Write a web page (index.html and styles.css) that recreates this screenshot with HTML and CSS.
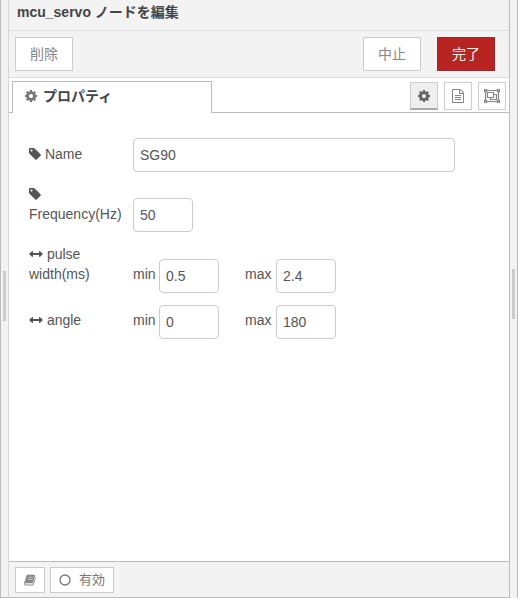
FILE: index.html
```
<!DOCTYPE html>
<html lang="ja">
<head>
<meta charset="utf-8">
<title>mcu_servo ノードを編集</title>
<link rel="stylesheet" href="styles.css">
</head>
<body>
<svg class="sprites" aria-hidden="true">
  <symbol id="cog" viewBox="128 128 1536 1536"><path d="M1152 896q0-106-75-181t-181-75-181 75-75 181 75 181 181 75 181-75 75-181zm512-109v222q0 12-8 23t-20 13l-185 28q-19 54-39 91 35 50 107 138 10 12 10 25t-9 23q-27 37-99 108t-94 71q-12 0-26-9l-138-108q-44 23-91 38-16 136-29 186-7 28-36 28h-222q-14 0-24.500-8.500t-11.500-21.500l-28-184q-49-16-90-37l-141 107q-10 9-25 9-14 0-25-11-126-114-165-168-7-10-7-23 0-12 8-23 15-21 51-66.500t54-70.500q-27-50-41-99l-183-27q-13-2-21-12.500t-8-23.500v-222q0-12 8-23t19-13l186-28q14-46 39-92-40-57-107-138-10-12-10-24 0-10 9-23 26-36 98.500-107.500t94.500-71.500q13 0 26 10l138 107q44-23 91-38 16-136 29-186 7-28 36-28h222q14 0 24.500 8.500t11.500 21.500l28 184q49 16 90 37l142-107q9-9 24-9 13 0 25 10 129 119 165 170 7 8 7 22 0 12-8 23-15 21-51 66.500t-54 70.500q26 50 41 98l183 28q13 2 21 12.500t8 23.500z"/></symbol>
  <symbol id="tag" viewBox="128 128 1536 1536"><path d="M576 448q0-53-37.500-90.500t-90.500-37.500-90.500 37.500-37.500 90.500 37.500 90.500 90.500 37.500 90.500-37.500 37.500-90.500zm1067 576q0 53-37 90l-491 492q-39 37-91 37-53 0-90-37l-715-716q-38-37-64.500-101t-26.500-117v-416q0-52 38-90t90-38h416q53 0 117 26.500t102 64.500l715 714q37 39 37 91z"/></symbol>
  <symbol id="file" viewBox="128 0 1536 1792"><path d="M1596 380q28 28 48 76t20 88v1152q0 40-28 68t-68 28h-1344q-40 0-68-28t-28-68v-1600q0-40 28-68t68-28h896q40 0 88 20t76 48zm-444-244v376h376q-10-29-22-41l-313-313q-12-12-41-22zm384 1528v-1024h-416q-40 0-68-28t-28-68v-416h-768v1536h1280zm-1024-864q0-14 9-23t23-9h704q14 0 23 9t9 23v64q0 14-9 23t-23 9h-704q-14 0-23-9t-9-23v-64zm736 224q14 0 23 9t9 23v64q0 14-9 23t-23 9h-704q-14 0-23-9t-9-23v-64q0-14 9-23t23-9h704zm0 256q14 0 23 9t9 23v64q0 14-9 23t-23 9h-704q-14 0-23-9t-9-23v-64q0-14 9-23t23-9h704z"/></symbol>
  <symbol id="group" viewBox="0 0 16 14"><g fill="none" stroke="currentColor" stroke-width="1.200"><path d="M3 1.500h10M3 12.500h10M1.500 3v8M14.500 3v8"/><path d="M.6.6h2v2h-2zM13.400.6h2v2h-2zM.6 11.400h2v2h-2zM13.400 11.400h2v2h-2z"/><path d="M3.500 3.500h6v5h-6zM9.500 5.500h3v5h-6v-2"/></g></symbol>
  <symbol id="arrows" viewBox="0 0 14 6"><path d="M0 3l3.200-3q.8 0 .8.800V2h6V.8q0-.8.800-.8L14 3l-3.200 3q-.8 0-.8-.8V4H4v1.200q0 .8-.8.800z"/></symbol>
  <symbol id="book" viewBox="0 0 13 12"><path fill-rule="evenodd" d="M4 .3h7q1.200 0 .9 1.100L9.900 8.600q-.3 1-1.300 1H1.800q-.9 0-.6.7.2.500.9.500h7q.6 0 .8-.6L12.200 2.600q.8.300.5 1.300L10.800 10.700q-.4 1.200-1.500 1.200H2Q.7 11.900.2 10.600 0 9.800.3 9L2.700 1.300Q3 .3 4 .3zM4.900 2.800l-.2.600h4.800l.2-.6zM4.300 4.800l-.2.600h4.800l.2-.6z"/></symbol>
  <symbol id="circle" viewBox="0 0 12 12"><circle cx="6" cy="6" r="5" fill="none" stroke="currentColor" stroke-width="1.300"/></symbol>
</svg>
<div class="workspace">
  <div class="separator"><span class="grip"></span></div>
  <main class="tray">
    <header class="title">mcu_servo ノードを編集</header>
    <div class="toolbar">
      <button type="button" class="button">削除</button>
      <div class="actions">
        <button type="button" class="button">中止</button>
        <button type="button" class="button primary">完了</button>
      </div>
    </div>
    <nav class="tabs">
      <a class="tab" href="#properties"><svg class="icon"><use href="#cog"/></svg>プロパティ</a>
      <div class="views">
        <button type="button" class="view selected" aria-label="プロパティ"><svg class="icon"><use href="#cog"/></svg></button>
        <button type="button" class="view" aria-label="説明"><svg class="icon file"><use href="#file"/></svg></button>
        <button type="button" class="view" aria-label="外観"><svg class="icon group"><use href="#group"/></svg></button>
      </div>
    </nav>
    <form class="form" id="properties">
      <div class="row">
        <label class="caption" for="name"><svg class="icon"><use href="#tag"/></svg> Name</label>
        <input class="field wide" id="name" type="text" value="SG90">
      </div>
      <div class="row">
        <label class="caption" for="freq"><svg class="icon"><use href="#tag"/></svg> Frequency(Hz)</label>
        <input class="field" id="freq" type="text" value="50">
      </div>
      <div class="row range">
        <span class="caption"><svg class="icon arrows"><use href="#arrows"/></svg> pulse width(ms)</span>
        <label class="bound" for="pmin">min</label>
        <input class="field" id="pmin" type="text" value="0.5">
        <label class="bound next" for="pmax">max</label>
        <input class="field" id="pmax" type="text" value="2.4">
      </div>
      <div class="row range">
        <span class="caption"><svg class="icon arrows"><use href="#arrows"/></svg> angle</span>
        <label class="bound" for="amin">min</label>
        <input class="field" id="amin" type="text" value="0">
        <label class="bound next" for="amax">max</label>
        <input class="field" id="amax" type="text" value="180">
      </div>
    </form>
    <footer class="footer">
      <button type="button" class="small" aria-label="ヘルプ"><svg class="icon book"><use href="#book"/></svg></button>
      <button type="button" class="small"><svg class="icon"><use href="#circle"/></svg>有効</button>
    </footer>
  </main>
  <div class="separator right"><span class="grip"></span></div>
</div>
</body>
</html>
```
FILE: styles.css
```
* {
  box-sizing: border-box;
}

body {
  margin: 0;
  background: #fff;
  color: #555;
  font: 14px/20px "Liberation Sans", "Noto Sans CJK JP", sans-serif;
}

button,
input {
  font: inherit;
  color: inherit;
}

.sprites {
  display: none;
}

.icon {
  width: 12px;
  height: 12px;
  fill: currentColor;
  flex: none;
}

.workspace {
  display: flex;
  min-height: 100vh;
}

.separator {
  display: flex;
  align-items: center;
  justify-content: center;
  flex: none;
  width: 9px;
  padding-bottom: 6px;
  background: #f3f3f3;
  border-left: 1px solid #bbb;
  border-right: 1px solid #d6d6d6;
  border-bottom: 1px solid #bbb;
}

.separator.right {
  border-color: #bbb;
  border-bottom: 0;
  padding-bottom: 10px;
}

.grip {
  width: 3px;
  height: 50px;
  background: #ccc;
}

.tray {
  display: flex;
  flex-direction: column;
  flex: 1;
  min-width: 0;
  border-bottom: 1px solid #bbb;
}

.title {
  padding: 2px 8px 8px;
  background: #f3f3f3;
  border-bottom: 1px solid #ddd;
  color: #444;
  font-weight: bold;
}

.toolbar {
  display: flex;
  align-items: center;
  justify-content: space-between;
  padding: 6px 14px 6px 6px;
  background: #f3f3f3;
  border-bottom: 1px solid #ddd;
}

.actions {
  display: flex;
  gap: 16px;
}

.button {
  width: 58px;
  height: 34px;
  padding: 0;
  background: #fff;
  border: 1px solid #ccc;
  color: #888;
}

.primary {
  background: #b72422;
  border-color: #9b2a29;
  color: #eee;
}

.tabs {
  display: flex;
  justify-content: space-between;
  padding: 3px 3px 0;
  border-bottom: 1px solid #bbb;
}

.tab {
  display: flex;
  align-items: center;
  gap: 6px;
  width: 200px;
  height: 32px;
  margin-bottom: -1px;
  padding: 0 12px 4px;
  background: #fff;
  border: 1px solid #bbb;
  border-bottom: 0;
  color: #444;
  font-weight: bold;
  text-decoration: none;
}

.tab .icon {
  color: #777;
}

.views {
  display: flex;
  gap: 6px;
  padding-top: 1px;
}

.view {
  display: flex;
  align-items: center;
  justify-content: center;
  width: 28px;
  height: 28px;
  padding: 0;
  background: #fff;
  border: 1px solid #ccc;
  color: #888;
}

.view.selected {
  background: #efefef;
  border-bottom: 2px solid #aaa;
  color: #666;
}

.icon.file {
  height: 14px;
}

.icon.group {
  width: 16px;
  height: 14px;
}

.form {
  display: flex;
  flex-direction: column;
  flex: 1;
  gap: 12px;
  padding: 25px 20px;
}

.row {
  display: flex;
  align-items: flex-end;
  gap: 4px;
}

.caption {
  flex: none;
  width: 100px;
  padding-bottom: 8px;
}

.caption .icon {
  vertical-align: -1px;
}

.caption .arrows {
  width: 14px;
  height: 6px;
  vertical-align: 2px;
}

.bound,
.range .caption {
  padding-bottom: 9px;
}

.bound {
  width: 22px;
}

.bound.next {
  width: 27px;
  margin-left: 22px;
}

.field {
  width: 60px;
  height: 34px;
  padding: 0 6px;
  background: #fff;
  border: 1px solid #ccc;
  border-radius: 4px;
}

.field.wide {
  width: 70%;
}

.footer {
  display: flex;
  gap: 5px;
  padding: 5px 6px 4px;
  background: #f3f3f3;
  border-top: 1px solid #bbb;
}

.small {
  display: flex;
  align-items: center;
  gap: 8px;
  height: 26px;
  padding: 0 8px;
  background: #fff;
  border: 1px solid #ccc;
  color: #777;
  font-size: 13px;
}

.icon.book {
  color: #888;
}
```
